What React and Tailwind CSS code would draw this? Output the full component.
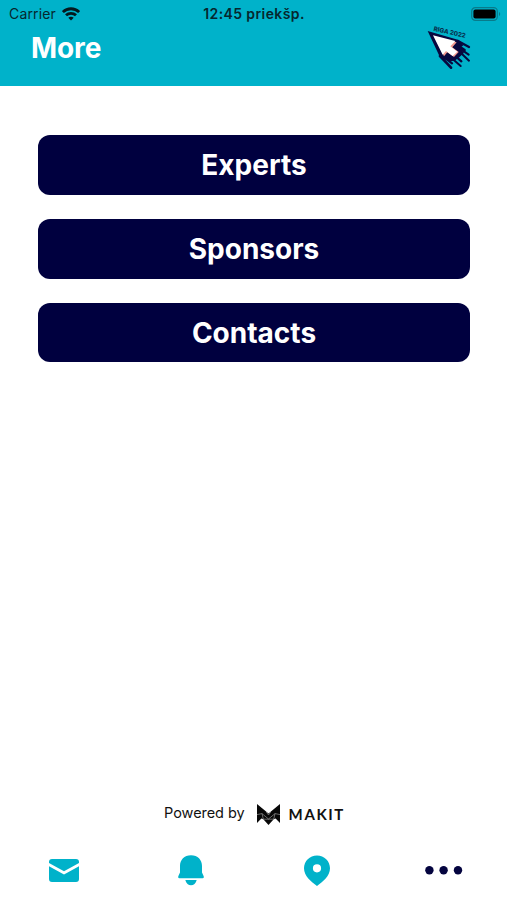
import React from 'react';

const MENU_ITEMS = ['Experts', 'Sponsors', 'Contacts'];

const StatusBar = () => (
  <div className="grid h-7 grid-cols-3 items-center pl-[9px] pr-[6px] text-[14px] leading-none text-[#06272e]">
    <div className="flex items-center gap-[6px]">
      <span className="tracking-[0.15px]">Carrier</span>
      <svg className="h-[14px] w-[18px]" viewBox="0 0 18 14" fill="none" stroke="#04191e" strokeWidth="2.8">
        <path d="M0.9 5.1C5.4 0.6 12.6 0.6 17.1 5.1" />
        <path d="M4 8.3c2.8-2.7 7.2-2.7 10 0" />
        <path d="M9 13.6 6.3 10.8c1.6-1.4 3.8-1.4 5.4 0z" fill="#04191e" stroke="none" />
      </svg>
    </div>
    <span className="-ml-[2px] text-center font-semibold whitespace-nowrap tracking-[0.4px]">12:45 priekšp.</span>
    <svg className="h-[14px] w-[30px] justify-self-end" viewBox="0 0 30 14">
      <rect x="0.7" y="0.7" width="25.6" height="12.6" rx="3.6" fill="none" stroke="#087b8b" strokeWidth="1.2" />
      <rect x="2.4" y="2.4" width="22.2" height="9.2" rx="2" fill="#000" />
      <path d="M28 5v4c1.6-.6 1.6-3.4 0-4z" fill="#087b8b" />
    </svg>
  </div>
);

const RigaLogo = () => (
  <svg className="h-[52px] w-[50px]" viewBox="0 0 150 156">
    <text
      x="28"
      y="32"
      transform="rotate(13 28 32)"
      fontSize="19"
      fontWeight="800"
      fill="#07304f"
      textLength="98"
      lengthAdjust="spacingAndGlyphs"
    >
      RIGA 2022
    </text>
    <path d="M11 33 104 60 118 76 108 84 120 98 106 112 92 122 74 124 48 112Z" fill="#08083f" />
    <g stroke="#08083f" strokeWidth="7" strokeLinecap="round">
      <path d="M102 63 135 81" />
      <path d="M104 78 122 90" />
      <path d="M104 92 135 122" strokeWidth="6" />
      <path d="M108 86 134 104" strokeWidth="6" />
      <path d="M94 108 112 124" />
      <path d="M80 112 110 138" strokeWidth="6" />
      <path d="M62 112 84 130" />
      <path d="M48 108 81 143" strokeWidth="8" />
    </g>
    <path d="M32 50 98 67 85 82 104 96 90 111 70 97 60 109Z" fill="#f39a92" />
    <path d="M27 46 94 63 79 79 100 95 86 108 66 93 56 104Z" fill="#fff" />
  </svg>
);

const Header = () => (
  <header className="h-[86px] bg-[#00b2ca]">
    <StatusBar />
    <div className="flex items-start justify-between pl-[31px] pr-[33px]">
      <h1 className="mt-px text-[28px] leading-[38px] font-bold tracking-[-0.1px] text-white">More</h1>
      <div className="-mt-2">
        <RigaLogo />
      </div>
    </div>
  </header>
);

const MakitLogo = () => (
  <div className="flex items-center gap-[9px]">
    <svg className="h-[21px] w-[23px]" viewBox="0 0 23 21">
      <path d="M0 0 11.5 9.5 23 0V19L18.6 14.6 16.7 15.2 11.5 21 6.3 15.2 4.4 14.6 0 19Z" fill="#080808" />
      <path
        d="M0 10.6 5 9.6 11.5 15 18 9.6 23 10.6M5 9.6 6.3 15.2H16.7L18 9.6M9.3 8 11.5 11 13.7 8"
        fill="none"
        stroke="#aaa"
        strokeWidth="0.6"
      />
    </svg>
    <span className="font-['Lato'] text-[15px] leading-none font-bold tracking-[1.6px]">MAKIT</span>
  </div>
);

const TabBar = () => (
  <nav className="grid h-[60px] grid-cols-4 justify-items-center pt-[15px] pl-px text-[#00b2ca]">
    <button aria-label="Messages" className="h-[31px]">
      <svg className="h-[31px] w-[30px]" viewBox="0 0 30 31" fill="currentColor">
        <path d="M3 4H27Q30 4 30 7V8L15 16.2 0 8V7Q0 4 3 4Z" />
        <path d="M0 11.3 15 19.6 30 11.3V24Q30 27 27 27H3Q0 27 0 24Z" />
      </svg>
    </button>
    <button aria-label="Notifications" className="h-[31px]">
      <svg className="h-[31px] w-[26px]" viewBox="0 0 26 31" fill="currentColor">
        <path d="M13 0.3C19.8 0.3 24 5 24 11V17.5L25.6 21Q26.3 23.3 24.6 23.3H1.4Q-.3 23.3 .4 21L2 17.5V11C2 5 6.2 .3 13 .3Z" />
        <path d="M7.3 25H18.7C17.8 28.6 15.6 30.2 13 30.2S8.2 28.6 7.3 25Z" />
      </svg>
    </button>
    <button aria-label="Map" className="h-[31px]">
      <svg className="h-[31px] w-[26px]" viewBox="0 0 26 31" fill="currentColor">
        <path
          fillRule="evenodd"
          d="M13 0.4C20.3 .4 26 6 26 13.2 26 21.2 18.8 26.3 13 31 7.2 26.3 0 21.2 0 13.2 0 6 5.7 .4 13 .4ZM13 9.2A4.1 4.1 0 1 0 13 17.4 4.1 4.1 0 0 0 13 9.2Z"
        />
      </svg>
    </button>
    <button aria-label="More" className="h-[31px] text-[#04043f]">
      <svg className="h-[31px] w-[38px]" viewBox="0 0 38 31" fill="currentColor">
        <circle cx="4.4" cy="15.3" r="4.2" />
        <circle cx="18.6" cy="15.3" r="4.2" />
        <circle cx="33" cy="15.3" r="4.2" />
      </svg>
    </button>
  </nav>
);

const App = () => {
  return (
    <div className="flex h-screen flex-col bg-white font-['Inter',sans-serif]">
      <Header />
      <main className="flex flex-1 flex-col gap-[24.5px] pt-[49.3px] pr-[37px] pl-[38px]">
        {MENU_ITEMS.map((item) => (
          <button
            key={item}
            className="h-[59.4px] rounded-[12px] bg-[#00003f] pt-px text-[28px] font-bold text-white"
          >
            {item}
          </button>
        ))}
      </main>
      <div className="mb-[15px] flex h-[22px] items-center justify-center gap-3 pl-[2px] text-[#111]">
        <span className="-mt-px text-[14.5px] leading-none tracking-[-0.05px]">Powered by</span>
        <MakitLogo />
      </div>
      <TabBar />
    </div>
  );
};

export default App;
